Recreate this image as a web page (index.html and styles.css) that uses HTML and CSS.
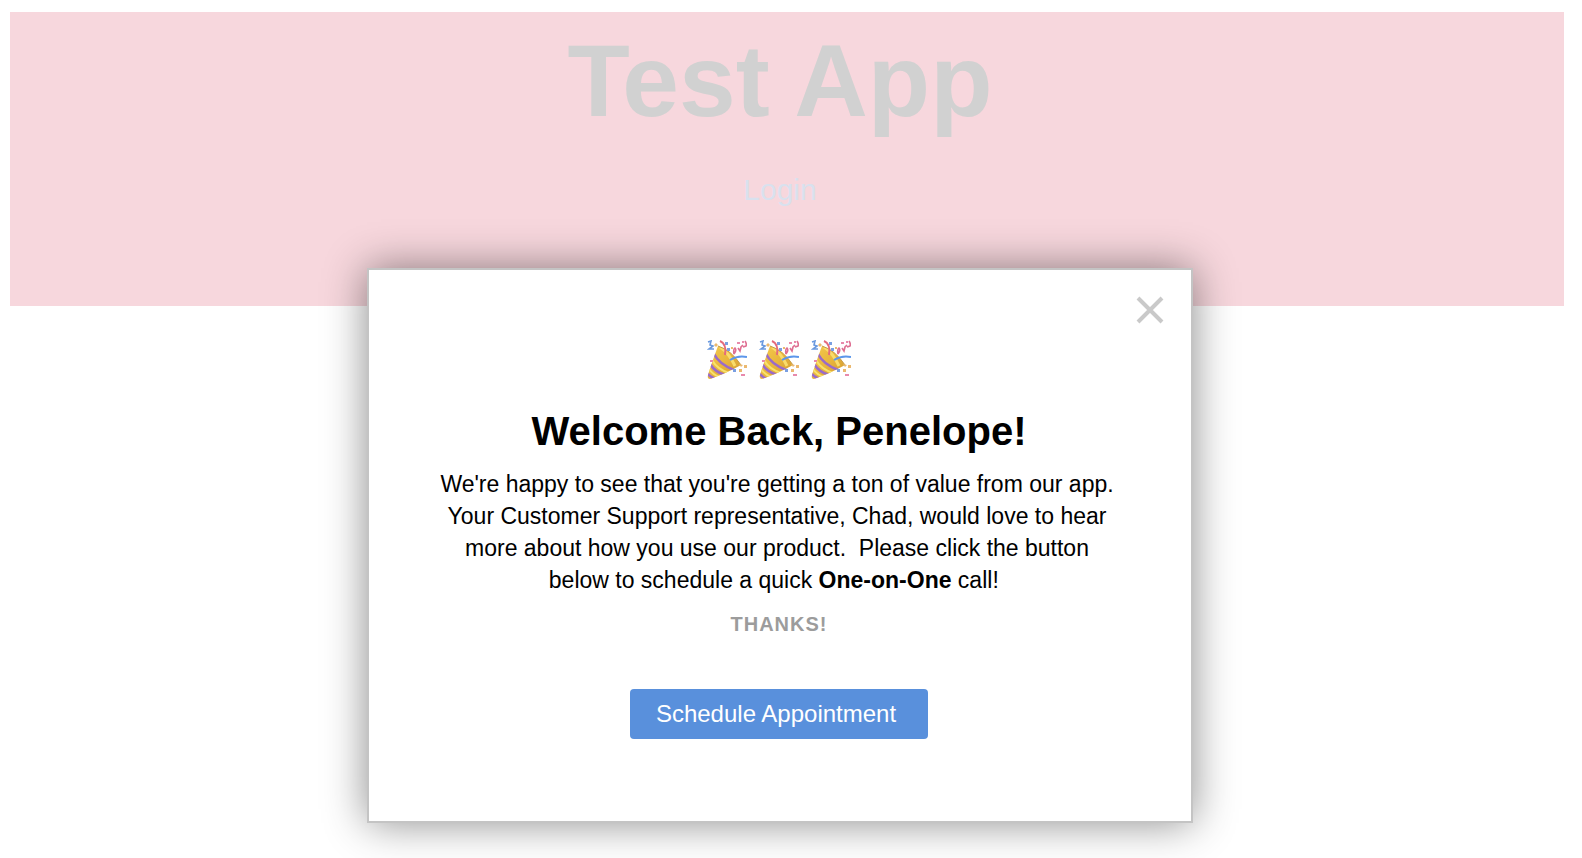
FILE: index.html
```html
<!DOCTYPE html>
<html lang="en">
<head>
    <meta charset="UTF-8">
    <meta name="viewport" content="width=device-width, initial-scale=1.0">
    <title>Test App</title>
    <link rel="stylesheet" href="styles.css">
</head>
<body>

<header class="banner">
    <h1>Test App</h1>
    <a href="#login" class="login">Login</a>
</header>

<!-- Party popper, used three times in the dialog -->
<svg class="sprite" aria-hidden="true">
    <defs>
        <linearGradient id="gold" x1="0" y1="0" x2="1" y2="1">
            <stop offset="0" stop-color="#f6cf52"/>
            <stop offset="0.5" stop-color="#e9b63c"/>
            <stop offset="1" stop-color="#c98f2c"/>
        </linearGradient>
        <clipPath id="cone-clip">
            <path d="M11 6 Q24 10 34 25 Q20 33 3 39 Q0 39 1 35 Q5 22 11 6Z"/>
        </clipPath>
    </defs>
    <symbol id="popper" viewBox="0 0 40 40">
        <g clip-path="url(#cone-clip)">
            <rect width="40" height="40" fill="url(#gold)"/>
            <path d="M13 7 Q22 13 28 26" fill="none" stroke="#f9dc6b" stroke-width="3"/>
            <path d="M7 14 Q12 24 27 30" fill="none" stroke="#9a6bc8" stroke-width="2.6"/>
            <path d="M3 24 Q8 32 18 35" fill="none" stroke="#9a6bc8" stroke-width="2.6"/>
            <path d="M0 33 Q3 37 8 39" fill="none" stroke="#9a6bc8" stroke-width="2.6"/>
            <path d="M5 20 Q10 29 22 33 M2 29 Q6 35 13 37" fill="none" stroke="#f8e26c" stroke-width="2"/>
        </g>
        <path d="M11 6 Q24 10 34 25" fill="none" stroke="#c79a45" stroke-width="1"/>
        <path d="M13 1 Q20 4 18 15" fill="none" stroke="#e46a7c" stroke-width="2"/>
        <path d="M23 20 Q31 15 40 17" fill="none" stroke="#5c96ea" stroke-width="2"/>
        <path d="M1 2 L4 1 L3 5 L6 6 L2 9 L7 9" fill="none" stroke="#6a99df" stroke-width="1.6"/>
        <path d="M27 14 Q26 9 28 8 Q30 10 27 14 M31 8 L33 11 L34 7 L36 5 M38 1 Q40 4 39 6 L36 7" fill="none" stroke="#de6f92" stroke-width="1.6"/>
        <path d="M18 2h3v3h-3z M20 8h3v3h-3z M26 29h3v3h-3z" fill="#7a9fe2"/>
        <path d="M30 2h3v2h-3z M35 1h2v2h-2z M34 34h4v2h-4z M3 20h3v2h-3z" fill="#e88aac"/>
        <path d="M37 25h3v3h-3z M32 29h3v3h-3z M7 5l2-2 2 2-2 2z M24 7h2v2h-2z M32 24l4 1-2 2z" fill="#ebb970"/>
    </symbol>
</svg>

<div class="overlay">
    <div class="modal" role="dialog" aria-labelledby="modal-title">
        <button type="button" class="close" aria-label="Close">
            <svg viewBox="0 0 28 28"><path d="M2 2 L26 26 M26 2 L2 26"/></svg>
        </button>

        <div class="poppers">
            <svg><use href="#popper"/></svg>
            <svg><use href="#popper"/></svg>
            <svg><use href="#popper"/></svg>
        </div>

        <h2 id="modal-title">Welcome Back, Penelope!</h2>
        <p class="message">We're happy to see that you're getting a ton of value from our app. Your Customer Support representative, Chad, would love to hear more about how you use our product.&nbsp; Please click the button below to schedule a quick <b>One-on-One</b> call!&nbsp;</p>
        <p class="thanks">THANKS!</p>
        <button type="button" class="schedule">Schedule Appointment</button>
    </div>
</div>

</body>
</html>
```
FILE: styles.css
```css
body {
    margin: 12px 18px 0 10px;
    font-family: "Liberation Sans", Arial, Helvetica, sans-serif;
    background-color: #fff;
    color: #000;
}

h1, h2, p {
    margin: 0;
}

.banner {
    display: flex;
    flex-direction: column;
    align-items: center;
    padding: 12px 14px 98px 0;
    background-color: #f7d7dd;
}

.banner h1 {
    font-size: 102px;
    line-height: 114px;
    color: #d1d1d1;
}

.login {
    margin-top: 34px;
    font-size: 30px;
    line-height: 36px;
    color: #d9e1ee;
    text-decoration: none;
}

.sprite {
    position: absolute;
    width: 0;
    height: 0;
}

/* dialog */
.overlay {
    position: absolute;
    top: 0;
    left: 0;
    right: 0;
    display: flex;
    justify-content: center;
    padding: 268px 22px 36px 0;
}

.modal {
    position: relative;
    box-sizing: border-box;
    display: flex;
    flex-direction: column;
    align-items: center;
    width: 826px;
    max-width: 100%;
    padding: 70px 62px 82px 60px;
    background-color: #fff;
    border: 2px solid #c4c4c4;
    box-shadow: 0 0 40px rgba(0, 0, 0, 0.45);
}

.close {
    position: absolute;
    top: 26px;
    right: 27px;
    width: 28px;
    height: 28px;
    padding: 0;
    border: 0;
    background: none;
    cursor: pointer;
}

.close svg {
    display: block;
    width: 28px;
    height: 28px;
    fill: none;
    stroke: #c9c9c9;
    stroke-width: 4;
}

.poppers {
    display: flex;
    gap: 12px;
}

.poppers svg {
    width: 40px;
    height: 40px;
}

.modal h2 {
    margin-top: 27px;
    font-size: 40px;
    line-height: 48px;
}

.message {
    max-width: 684px;
    margin-top: 13px;
    padding-right: 4px;
    font-size: 23px;
    line-height: 32px;
    text-align: center;
}

.thanks {
    margin-top: 16px;
    font-size: 20px;
    line-height: 24px;
    font-weight: bold;
    letter-spacing: 1px;
    color: #9c9c9c;
}

.schedule {
    margin-top: 53px;
    padding: 10px 32px 10px 26px;
    border: 0;
    border-radius: 4px;
    background-color: #5990dc;
    color: #fff;
    font-family: inherit;
    font-size: 24px;
    line-height: 30px;
    cursor: pointer;
}
```
